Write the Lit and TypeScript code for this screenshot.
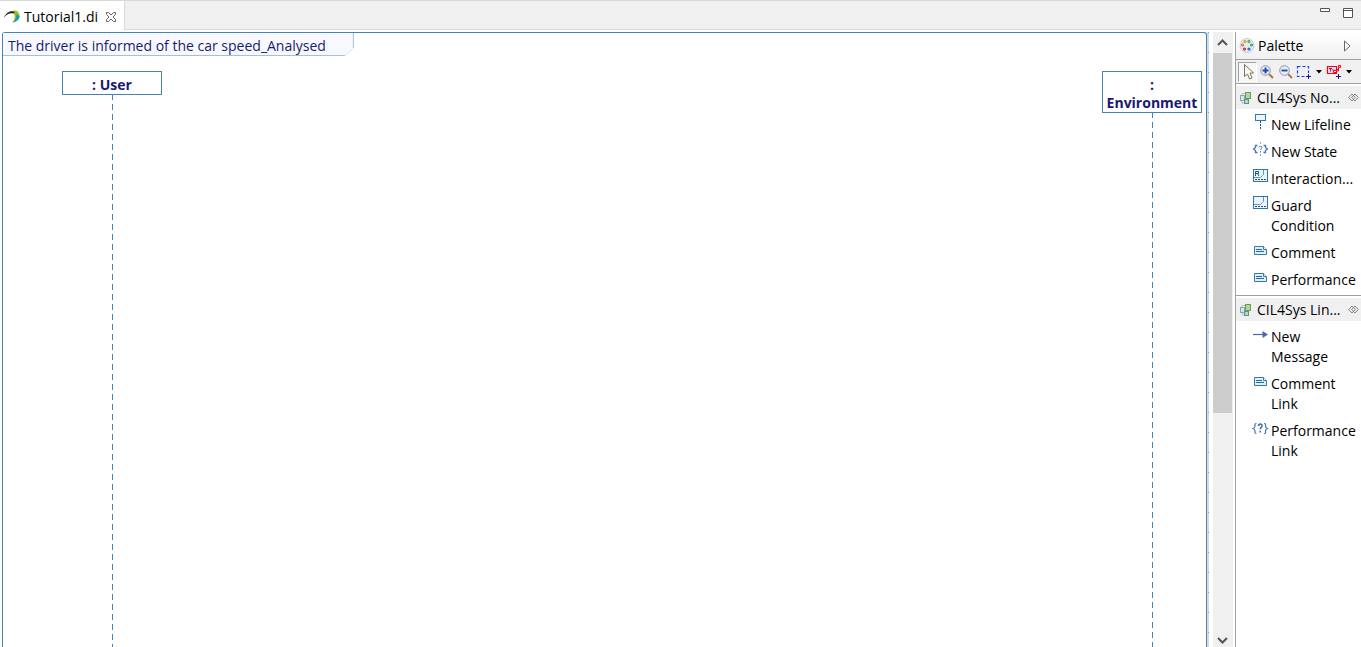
import { LitElement, html, css, svg } from "lit";
import { customElement, property } from "lit/decorators.js";

const icons: Record<string, unknown> = {
  lifeline: svg`<rect x="3.5" y="1.5" width="10" height="6" fill="#eaf6fb" stroke="#3b78b0"/><path d="M8.5 8v2M8.5 11v2M8.5 14v2" stroke="#1f4f80"/>`,
  state: svg`<g fill="none" stroke="#4a74ad"><path d="M5.500 5.500h-2v2L1.500 9l2 1.500v2h2M11.500 5.500h2v2l2 1.500-2 1.500v2h-2" stroke-width="1.300"/><path d="M8.500 2v2M8.500 14v2" stroke="#7fa3cc"/><path d="M7 7.500C7 6 10 6 10 7.500 10 8.700 8.500 8.800 8.500 10M8.500 11.200v1.300" stroke="#2a6cae"/></g>`,
  interaction: svg`<rect x="1.500" y="2.500" width="14" height="12" fill="#eaf6fb" stroke="#2f74ad"/><path d="M2 10.500h6.500l2-2 1-1V3" fill="none" stroke="#5b97c6"/><path d="M3.500 9V4.500h3v2h-3M5.500 6.500l1.500 2.500" fill="none" stroke="#24508e"/><path d="M3 12.500h11" stroke="#1f4f80" stroke-dasharray="2 1"/>`,
  guard: svg`<rect x="1.500" y="2.500" width="14" height="12" fill="#eaf6fb" stroke="#2f74ad"/><path d="M2 10.500h6.500l2-2 1-1V3" fill="none" stroke="#5b97c6"/><path d="M3 12.500h11" stroke="#1f4f80" stroke-dasharray="2 1"/>`,
  comment: svg`<path d="M2.500 5.500h9l3 3v5h-12z" fill="#d9f1f8" stroke="#3b78a8"/><path d="M11.500 5.500v3h3" fill="#fff" stroke="#3b78a8"/><path d="M4 8.500h6M4 10.500h8" stroke="#2b679b"/>`,
  message: svg`<path d="M1 9.500h10" stroke="#4169aa" stroke-width="1.200"/><path d="M10.500 6l5.500 3.500-5.500 3.500z" fill="#4169aa"/>`,
  performance: svg`<g fill="none" stroke="#4a70b0"><path d="M4.500 4.500c-2 0-1.500 1-1.500 2.500S2.500 9 1.200 9.500C2.500 10 3 10.500 3 12s-.5 2.500 1.500 2.500M12 4.500c2 0 1.500 1 1.500 2.500s.5 2 1.800 2.500c-1.300.5-1.800 1-1.800 2.500s.5 2.500-1.500 2.500" stroke-width="1.200"/><path d="M6.500 7C6.500 4.500 10 4.500 10 6.700 10 8.500 8.200 8.300 8.200 10.300M8.200 11.800v1.700" stroke-width="1.600"/></g>`,
};

@customElement("palette-drawer")
class PaletteDrawer extends LitElement {
  @property() label = "";
  @property({ attribute: false }) items: [string, string][] = [];
  static styles = css`
    :host { display: block; border-top: 1px solid #a0a0a0; padding-top: 2px; }
    * { box-sizing: border-box; }
    button { font: inherit; color: inherit; border: 0; margin: 0; background: none; text-align: left; display: flex; width: 100%; }
    .head { height: 23px; align-items: center; background: #f0f0f0; padding: 0 2px; }
    .head span { flex: 1; padding-left: 3px; white-space: nowrap; }
    .head svg { flex: none; }
    ul { list-style: none; margin: 0; padding: 6px 0 5px; display: grid; gap: 7px; }
    .item { padding: 0 4px 0 16px; gap: 2px; line-height: 20px; }
    .item svg { flex: none; margin-top: -2px; }
  `;
  render() {
    return html`<button class="head" aria-expanded="true">
        <svg width="16" height="16" viewBox="0 0 16 16" aria-hidden="true">
          <path d="M4 5V3.500h3M4 11v2h3" fill="none" stroke="#b5c3c8"/>
          <rect x="7.500" y="2.500" width="5" height="6" fill="#b5d68e" stroke="#6d9a62"/>
          <rect x="2.500" y="5.500" width="4" height="5" fill="#d3e6ea" stroke="#8aa7b1"/>
          <rect x="6.500" y="9.500" width="4" height="4" fill="#b7d6c6" stroke="#5f8f92"/>
        </svg>
        <span>${this.label}</span>
        <svg width="11" height="9" viewBox="0 0 11 9" aria-hidden="true">
          <path d="M4 1L.7 4.500 4 8l3.300-3.500zM7 1L3.700 4.500 7 8l3.300-3.500z" fill="none" stroke="#777" stroke-width=".9"/>
        </svg>
      </button>
      <ul>${this.items.map(([icon, text]) => html`<li><button class="item">
        <svg width="17" height="16" viewBox="0 0 17 16" aria-hidden="true">${icons[icon]}</svg><span>${text}</span>
      </button></li>`)}</ul>`;
  }
}

@customElement("app-root")
class AppRoot extends LitElement {
  static styles = css`
    :host { display: flex; flex-direction: column; height: 100vh; overflow: hidden; background: #fff; color: #000; font: 14px/20px "Open Sans", "Noto Sans", sans-serif; }
    * { box-sizing: border-box; }
    button { font: inherit; color: inherit; border: 0; margin: 0; padding: 0; background: none; display: flex; align-items: center; justify-content: center; }
    .tabs { flex: none; height: 30px; display: flex; background: #f0f0f0; border-top: 1px solid #d9d9d9; }
    .tab { display: flex; align-items: center; padding: 3px 7px 0 4px; background: #fff; border-right: 1px solid #d9d9d9; gap: 4px; }
    .tab .close { margin-left: 3px; }
    .fill { flex: 1; display: flex; justify-content: flex-end; align-items: flex-start; gap: 12px; padding: 6px 8px 0 0; border-bottom: 1px solid #d9d9d9; }
    .main { flex: 1; display: flex; min-height: 0; }
    .canvas { flex: 1; display: flex; min-width: 0; padding: 2px 4px 0 2px; }
    .frame { flex: 1; display: flex; flex-direction: column; border: 1px solid #4682b4; border-bottom: 0; border-radius: 3px 3px 0 0; color: #191970; }
    .title { align-self: flex-start; position: relative; height: 23px; padding: 3px 28px 0 5px; white-space: nowrap; }
    .title svg { position: absolute; inset: 0; width: 100%; height: 100%; }
    .title span { position: relative; }
    .lifelines { flex: 1; display: flex; justify-content: space-between; padding: 15px 4px 0 59px; font-weight: 700; line-height: 18px; }
    .lifeline { display: flex; flex-direction: column; align-items: center; width: 100px; text-align: center; }
    .head { width: 100%; border: 1px solid #4682b4; padding: 4px 2px 0; background: #fff; }
    .stem { flex: 1; width: 1px; margin-left: 1px; background: repeating-linear-gradient(#4682b4 0 5px, transparent 5px 9px, #4682b4 9px 10px); }
    .shade { width: 2px; background: repeating-linear-gradient(#999 0 1px, transparent 1px 20px) right / 1px 100% no-repeat, #d5dde4; }
    .scroll { width: 20px; margin-top: 2px; padding-right: 1px; display: flex; flex-direction: column; background: #f0f0f0; }
    .scroll button { height: 21px; }
    .scroll .down { height: 14px; }
    .track { flex: 1; }
    .thumb { height: 62%; background: #cdcdcd; }
    .palette { flex: none; width: 126px; margin: 2px 0 0 2px; border-left: 1px solid #a0a0a0; }
    .ptitle { display: flex; align-items: center; height: 28px; padding: 1px 10px 0 3px; gap: 3px; background: linear-gradient(#fff, #f0f0f0); border-bottom: 1px solid #a0a0a0; }
    .ptitle span { flex: 1; }
    .tools { display: flex; align-items: center; height: 23px; padding: 1px 0 1px 2px; background: #f0f0f0; }
    .tools button { width: 19px; height: 20px; }
    .tools .on { border: 1px solid; border-color: #a0a0a0 #fff #fff #a0a0a0; background: #f7f7f7; }
    .tools .wide { width: 18px; }
    .tools .drop { width: 12px; }
  `;
  render() {
    const drop = html`<button class="drop" aria-label="More tools"><svg width="6" height="4" viewBox="0 0 6 4"><path d="M0 0h6L3 3.500z" fill="#000"/></svg></button>`;
    const lens = (plus: boolean) => html`<svg width="16" height="16" viewBox="0 0 16 16">
      <path d="M10 10l4 4" stroke="#a87b4c" stroke-width="2"/><circle cx="6.500" cy="6.500" r="4.800" fill="#e6eefb" stroke="#8998ad"/>
      <path d=${plus ? "M3.500 6.500h6M6.500 3.500v6" : "M3.500 6.500h6"} stroke="#24459c" stroke-width="1.800"/></svg>`;
    return html`
      <header class="tabs">
        <div class="tab" role="tab" aria-selected="true">
          <svg width="16" height="16" viewBox="0 0 16 16" aria-hidden="true">
            <path d="M8 2.500C12 0 16 3 15.500 8 15 11 12 13 8.500 13.500 11 11 12 6 8 2.500z" fill="#9ac31c"/>
            <path d="M15.600 7C15 11 12 13 8.500 13.500 11.500 11 12 9 12.500 5z" fill="#169fb5"/>
            <path d="M0 8.500C2 4 6 1 11 3L9.500 4.500C6 3.800 3 5 0 8.500z" fill="#222"/>
          </svg>
          <span>Tutorial1.di</span>
          <button class="close" aria-label="Close"><svg width="12" height="12" viewBox="0 0 12 12"><path d="M1.500 1.500h2L6 4l2.500-2.500h2v2L8 6l2.500 2.500v2h-2L6 8l-2.500 2.500h-2v-2L4 6 1.500 3.500z" fill="#fff" stroke="#666"/></svg></button>
        </div>
        <div class="fill">
          <button aria-label="Minimize"><svg width="11" height="12" viewBox="0 0 11 12"><path d="M.5 1.500h9v3h-9z" fill="#fff" stroke="#555"/></svg></button>
          <button aria-label="Maximize"><svg width="10" height="12" viewBox="0 0 10 12"><path d="M.5 1.500h9v9h-9zM1 3.500h8" fill="#fff" stroke="#555"/></svg></button>
        </div>
      </header>
      <div class="main">
        <main class="canvas">
          <section class="frame">
            <div class="title">
              <svg viewBox="0 0 351 23" preserveAspectRatio="none" aria-hidden="true"><path d="M0 0h350.500v15l-8 7.500H0z" fill="#f8f9ff"/><path d="M350.500 0v15M342 22.500H0" stroke="#a3bfd9" fill="none"/><path d="M350.500 15l-8 7.500" stroke="#e2eaf3"/></svg>
              <span>The driver is informed of the car speed_Analysed</span>
            </div>
            <div class="lifelines">
              <div class="lifeline"><div class="head">: User</div><div class="stem"></div></div>
              <div class="lifeline"><div class="head">: Environment</div><div class="stem"></div></div>
            </div>
          </section>
          <div class="shade"></div>
        </main>
        <div class="scroll">
          <button aria-label="Scroll up"><svg width="11" height="7" viewBox="0 0 11 7"><path d="M1 6l4.500-4.500L10 6" fill="none" stroke="#555" stroke-width="2"/></svg></button>
          <div class="track"><div class="thumb"></div></div>
          <button class="down" aria-label="Scroll down"><svg width="11" height="7" viewBox="0 0 11 7"><path d="M1 1l4.500 4.500L10 1" fill="none" stroke="#555" stroke-width="2"/></svg></button>
        </div>
        <aside class="palette">
          <div class="ptitle">
            <svg width="16" height="16" viewBox="0 0 16 16" aria-hidden="true"><circle cx="8" cy="7.500" r="7" fill="#e3ecf9" stroke="#bdd0ea"/>
              <g fill="#fff" stroke-width="1.200"><circle cx="6" cy="3.500" r="1" stroke="#e0a000"/><circle cx="10" cy="3.500" r="1" stroke="#58a828"/><circle cx="3.500" cy="7" r="1" stroke="#e87020"/><circle cx="12.500" cy="7" r="1" stroke="#30a060"/><circle cx="5.500" cy="11" r="1" stroke="#d82020"/><circle cx="10" cy="11" r="1" stroke="#3058c8"/></g></svg>
            <span>Palette</span>
            <button aria-label="Collapse palette"><svg width="7" height="12" viewBox="0 0 7 12"><path d="M.5 1v10L6 6z" fill="#fff" stroke="#666"/></svg></button>
          </div>
          <div class="tools">
            <button class="on" aria-label="Select"><svg width="14" height="18" viewBox="0 0 14 18"><path d="M3.500 1.500v12l3-2.500 2 5 2.500-1-2-5h3.500z" fill="#fffdf0" stroke="#777062"/></svg></button>
            <button aria-label="Zoom in">${lens(true)}</button>
            <button aria-label="Zoom out">${lens(false)}</button>
            <button class="wide" aria-label="Marquee"><svg width="16" height="16" viewBox="0 0 16 16"><rect x="1.500" y="2.500" width="11" height="10" fill="none" stroke="#1c3cff" stroke-width="1.200" stroke-dasharray="3 2"/><path d="M12.500 9v6M9 12.500h6" stroke="#f0f0f0" stroke-width="3"/><path d="M12.500 10v5M10 12.500h5" stroke="#201080"/></svg></button>
            ${drop}
            <button class="wide" aria-label="Pin elements"><svg width="16" height="16" viewBox="0 0 16 16"><path d="M1.500 2.500h9v7h-9z" fill="#dcdcff" stroke="#f00" stroke-width="1.200"/><path d="M3 4.500h3M4.500 4.500v3" stroke="#e00020" fill="none"/><path d="M6.500 5l2 3 4.500-4" stroke="#2030d0" fill="none"/><path d="M12.500 1.500h2v2h-2zM7.500 6.500h3v2h-3z" fill="#fff" stroke="#f00"/><path d="M12.500 4v3h-2" fill="none" stroke="#f00"/><path d="M12.500 10v5M10 12.500h5" stroke="#201080"/></svg></button>
            ${drop}
          </div>
          <palette-drawer label="CIL4Sys No..." .items=${[["lifeline", "New Lifeline"], ["state", "New State"], ["interaction", "Interaction..."], ["guard", "Guard Condition"], ["comment", "Comment"], ["comment", "Performance"]]}></palette-drawer>
          <palette-drawer label="CIL4Sys Lin..." .items=${[["message", "New Message"], ["comment", "Comment Link"], ["performance", "Performance Link"]]}></palette-drawer>
        </aside>
      </div>`;
  }
}
